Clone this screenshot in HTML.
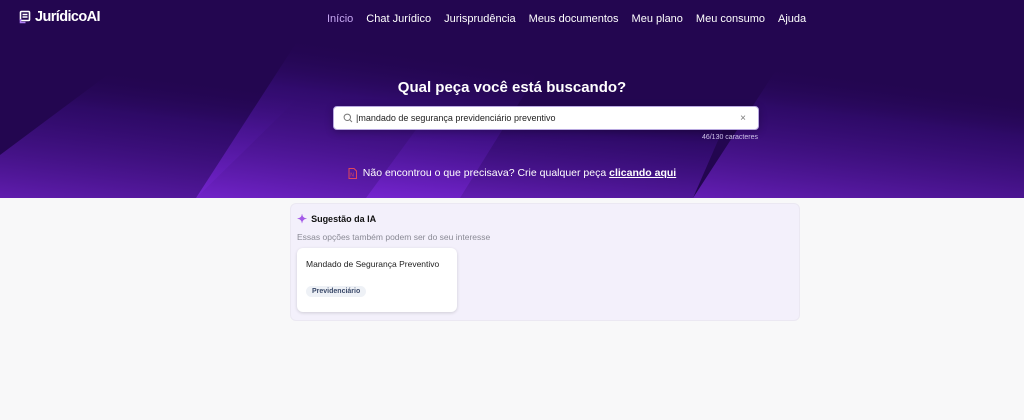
<!DOCTYPE html>
<html><head><meta charset="utf-8"><style>
*{margin:0;padding:0;box-sizing:border-box}
body{width:1024px;height:420px;background:#f8f8f9;font-family:"Liberation Sans",sans-serif;overflow:hidden;position:relative}
.hero{position:absolute;left:0;top:0;width:1024px;height:198px;background:#230650;overflow:hidden}
.bg{position:absolute;left:0;top:0}
.logo{position:absolute;left:19px;top:9px;color:#fff;font-size:14.5px;font-weight:bold;display:flex;align-items:center;gap:4px;letter-spacing:-0.6px}
nav{position:absolute;top:13px;left:327px;display:flex;gap:13px;font-size:11px;color:#fff}
nav span:first-child{color:#c6a7f2}
h1{position:absolute;top:79px;left:0;width:1024px;text-align:center;color:#fff;font-size:15px;font-weight:bold}
.search{position:absolute;left:333px;top:106px;width:426px;height:24px;background:#fff;border-radius:4px;border:1px solid #b9a9e0;font-size:9px;color:#222;display:flex;align-items:center;padding-left:9px;box-shadow:0 2px 8px rgba(0,0,0,.25)}
.cnt{position:absolute;top:134px;right:266px;color:#cfc4e8;font-size:7px}
.nf{position:absolute;top:167px;left:0;width:1024px;text-align:center;color:#fff;font-size:10.5px;display:flex;justify-content:center;align-items:center;gap:6px}
.nf u{font-weight:bold}
.panel{position:absolute;left:290px;top:203px;width:510px;height:118px;background:#f3f0fb;border-radius:6px;border:1px solid #ebe8f2}
.card{position:absolute;left:6px;top:44px;width:160px;height:64px;background:#fff;border-radius:6px;box-shadow:0 1px 3px rgba(0,0,0,.15)}
</style></head><body>
<div class="hero">
<svg class="bg" width="1024" height="198">
<defs>
<linearGradient id="g" x1="0" y1="1" x2="0.3" y2="0"><stop offset="0" stop-color="#7a26d6"/><stop offset="0.7" stop-color="#3c0f85" stop-opacity=".6"/><stop offset="1" stop-color="#230650" stop-opacity="0"/></linearGradient>
</defs>
<polygon points="0,155 118,67 330,67 196,198 0,198" fill="url(#g)" opacity=".7"/>
<polygon points="196,198 300,37 560,37 460,198" fill="url(#g)" opacity=".9"/>
<polygon points="366,198 445,90 740,90 693,198" fill="url(#g)" opacity=".8"/>
<polygon points="693,198 778,67 1024,67 1024,198" fill="url(#g)" opacity=".75"/>
</svg>
<div class="logo"><svg width="12" height="14" viewBox="0 0 12 14"><rect x="1.5" y="1.5" width="9" height="9" rx="1" fill="none" stroke="#fff" stroke-width="1.6"/><path d="M3.5 4.5h5M3.5 7h5" stroke="#fff" stroke-width="1.4"/><path d="M1.5 9v3.5h5" stroke="#b07ef5" stroke-width="1.6" fill="none"/></svg>JurídicoAI</div>
<nav><span>Início</span><span>Chat Jurídico</span><span>Jurisprudência</span><span>Meus documentos</span><span>Meu plano</span><span>Meu consumo</span><span>Ajuda</span></nav>
<h1>Qual peça você está buscando?</h1>
<div class="search"><svg width="10" height="10" viewBox="0 0 10 10" style="margin-right:3px;flex:none"><circle cx="4.3" cy="4.3" r="3.2" fill="none" stroke="#777" stroke-width="1"/><path d="M6.7 6.7L9 9" stroke="#777"/></svg>|mandado de segurança previdenciário preventivo<span style="position:absolute;right:12px;color:#777;font-size:10px">×</span></div>
<div class="cnt">46/130 caracteres</div>
<div class="nf"><svg width="9" height="11" viewBox="0 0 9 11"><path d="M1 .5h5l2.5 2.5v7.5h-7.5z" fill="none" stroke="#e0485a"/><text x="2.2" y="8.5" font-size="5" fill="#e0485a" font-family="Liberation Sans">N</text></svg><span>Não encontrou o que precisava? Crie qualquer peça <u>clicando aqui</u></span></div>
</div>
<div class="panel">
<div style="position:absolute;left:6px;top:8px;font-size:9px;font-weight:bold;color:#111;display:flex;align-items:center;gap:4px"><span style="color:#a45ae8;font-size:12px">✦</span>Sugestão da IA</div>
<div style="position:absolute;left:6px;top:28px;font-size:8.5px;color:#8a8a95">Essas opções também podem ser do seu interesse</div>
<div class="card">
<div style="position:absolute;left:9px;top:11px;font-size:8.5px;color:#222">Mandado de Segurança Preventivo</div>
<div style="position:absolute;left:9px;top:38px;font-size:7px;color:#3b4a6a;background:#eef1f6;border-radius:8px;padding:2px 6px;font-weight:bold">Previdenciário</div>
</div>
</div>
</body></html>
